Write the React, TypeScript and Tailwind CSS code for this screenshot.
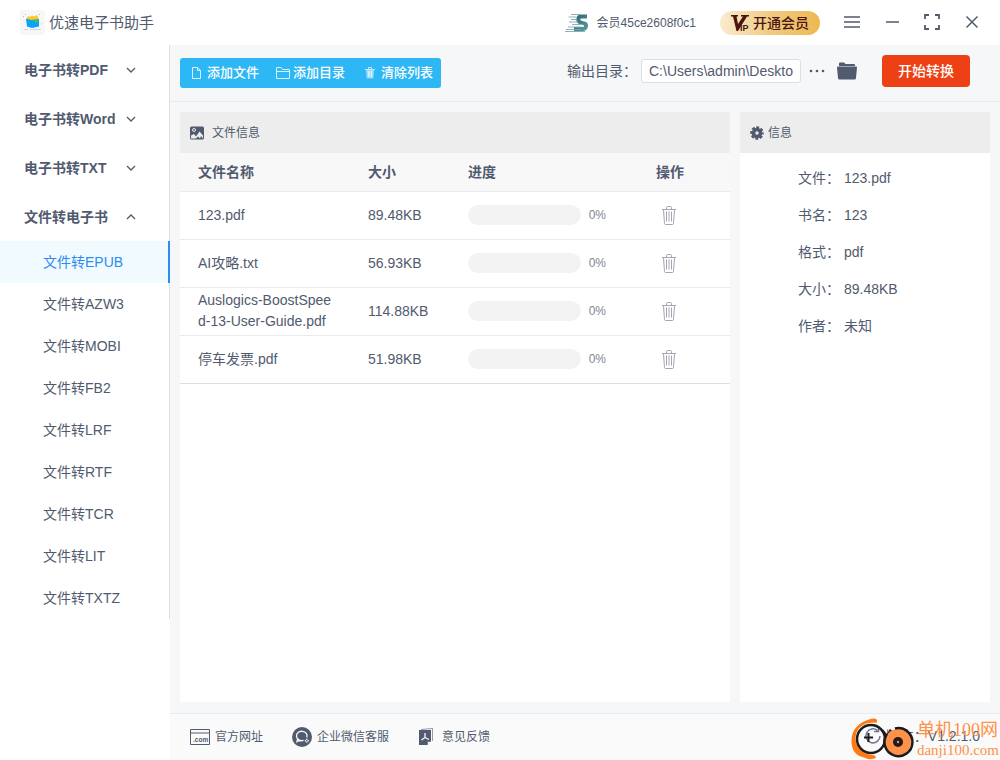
import { useState } from 'react';

const MENU = [
  { id: 'pdf', label: '电子书转PDF' },
  { id: 'word', label: '电子书转Word' },
  { id: 'txt', label: '电子书转TXT' },
  { id: 'ebook', label: '文件转电子书' },
];

const FORMATS = ['EPUB', 'AZW3', 'MOBI', 'FB2', 'LRF', 'RTF', 'TCR', 'LIT', 'TXTZ'];

const FILES = [
  { name: '123.pdf', size: '89.48KB', progress: 0 },
  { name: 'AI攻略.txt', size: '56.93KB', progress: 0 },
  { name: 'Auslogics-BoostSpeed-13-User-Guide.pdf', size: '114.88KB', progress: 0 },
  { name: '停车发票.pdf', size: '51.98KB', progress: 0 },
];

const INFO = [
  ['文件', '123.pdf'],
  ['书名', '123'],
  ['格式', 'pdf'],
  ['大小', '89.48KB'],
  ['作者', '未知'],
];

function AppLogo() {
  return (
    <svg width="25" height="25" viewBox="0 0 25 25" aria-hidden="true">
      <rect width="25" height="25" rx="3" fill="#f7f7f8" />
      <path d="M7 8l1-2 2 1 2-1.500 2 1 3-1.500 1.500 3v3H7z" fill="#ffc81e" />
      <path d="M6 8.500l5 1.500 8-1v7.500l-7 1.500-5-1.500z" fill="#08a4f7" />
      <path d="M14 10.500l4-.7v2l-3 .7z" fill="#4cc63c" />
      <path d="M3 6l1 1M5 4.500h1M19 4.500h1M21 14h1" stroke="#b4b4e0" />
      <path d="M4 19.500h4M10 19.500h11" stroke="#d8d3ee" />
    </svg>
  );
}

function Avatar() {
  return (
    <svg width="24" height="20" viewBox="0 0 24 20" fill="none" aria-hidden="true">
      <defs>
        <linearGradient id="avatar" x1="0" y1="0" x2="1" y2="1">
          <stop offset="0" stopColor="#356078" />
          <stop offset="1" stopColor="#4f9c9d" />
        </linearGradient>
      </defs>
      <path d="M22 3.500h-5.500c-4 0-4.500 5-.5 6l3 .8c3.500 1 2.500 5.700-1.500 5.700H9" stroke="url(#avatar)" strokeWidth="3.800" />
      <path d="M6 1.500h9M3.500 4h8M6 6.500h6M4 9h9M7 11.500h11M3 14h14M1 16.500h15M0 18.500h20" stroke="#7fa9ae" strokeWidth=".9" />
    </svg>
  );
}

function Chevron({ up }: { up?: boolean }) {
  return (
    <svg width="10" height="6" viewBox="0 0 10 6" fill="none" stroke="currentColor" strokeWidth="1.300" aria-hidden="true">
      <path d={up ? 'M1 5l4-4 4 4' : 'M1 1l4 4 4-4'} />
    </svg>
  );
}

function TrashIcon() {
  return (
    <svg width="14" height="19" viewBox="0 0 14 19" fill="none" stroke="#a3a7b3" aria-hidden="true">
      <path d="M4.500 3V1.500q0-1 1-1h3q1 0 1 1V3M0 3.500h14M1.500 4l1 13.500q.1 1 1 1h7q.9 0 1-1l1-13.500" />
      <path d="M4.500 5.500v10M7 5.500v10M9.500 5.500v10" />
    </svg>
  );
}

function Watermark() {
  return (
    <div className="pointer-events-none absolute right-0 bottom-0 flex items-end pr-px">
      <svg width="66" height="42" viewBox="0 0 66 42" fill="none" aria-hidden="true">
        <path d="M26 2Q24-.5 18 1.500Q1 7 .5 22T13 39.500q6 3 12 .5l-1-2.500-6-1Q5 32 4.500 21T15 5.500q5-1 11-1z" fill="#ff7a12" />
        <circle cx="20" cy="21" r="14" stroke="#1f1b1d" strokeWidth="2.500" />
        <path d="M17.500 15v9M13 19.500h9" stroke="#1f1b1d" strokeWidth="2" />
        <path d="M31 12l4 5M40 12l-4 6" stroke="#1f1b1d" strokeWidth="2.500" />
        <circle cx="47" cy="24" r="13" fill="#ff9148" />
        <path d="M44 10.500A14 14 0 1 1 36 16" stroke="#1f1b1d" strokeWidth="2.500" />
        <circle cx="47" cy="24" r="5" fill="#1f1b1d" />
        <circle cx="47" cy="24" r="1.200" fill="#ff9148" />
      </svg>
      <div className="font-['Liberation_Serif','Noto_Sans_CJK_SC',serif] text-[#ff9148]">
        <div className="text-[18px] leading-5">单机100网</div>
        <div className="text-[15px] leading-5">danji100.com</div>
      </div>
    </div>
  );
}

export default function App() {
  const [openMenu, setOpenMenu] = useState('ebook');
  const [format, setFormat] = useState('EPUB');
  const [output, setOutput] = useState('C:\\Users\\admin\\Deskto');

  return (
    <div className="relative flex min-h-screen flex-col bg-white font-['Liberation_Sans','Noto_Sans_CJK_SC',sans-serif] text-sm text-[#515a6e]">
      {/* Title bar */}
      <header className="flex h-[45px] items-center justify-between pr-[22px] pl-5">
        <div className="flex items-center gap-1">
          <AppLogo />
          <h1 className="text-[15px]">优速电子书助手</h1>
        </div>
        <div className="flex items-center">
          <Avatar />
          <span className="ml-2 text-xs">会员45ce2608f0c1</span>
          <button
            type="button"
            className="ml-6 flex h-6 w-[100px] items-center justify-center gap-[3px] rounded-full bg-linear-to-r from-[#faebd0] via-[#f1cb80] to-[#edb850] font-medium text-[#4a1511]"
          >
            <svg width="19" height="18" viewBox="0 0 19 18" fill="currentColor" aria-hidden="true">
              <path d="M0 1h7v1.500H5.500L7 10l5-7.500h-2V1h8v1.500h-2L7 17H5.500L2 2.500H0z" />
              <text x="9" y="17" fontSize="9" fontWeight="bold">IP</text>
            </svg>
            开通会员
          </button>
          <div className="ml-6 flex items-center gap-6 pb-0.5">
            <button type="button" aria-label="菜单">
              <svg width="16" height="16" viewBox="0 0 16 16" stroke="currentColor" strokeWidth="1.500" aria-hidden="true">
                <path d="M0 3h16M0 8h16M0 13h16" />
              </svg>
            </button>
            <button type="button" aria-label="最小化">
              <svg width="16" height="16" viewBox="0 0 16 16" stroke="currentColor" strokeWidth="1.500" aria-hidden="true">
                <path d="M2 8h13" />
              </svg>
            </button>
            <button type="button" aria-label="最大化">
              <svg width="16" height="16" viewBox="0 0 16 16" fill="none" stroke="currentColor" strokeWidth="1.800" aria-hidden="true">
                <path d="M1 5V1h4M11 1h4v4M15 11v4h-4M5 15H1v-4" />
              </svg>
            </button>
            <button type="button" aria-label="关闭">
              <svg width="14" height="16" viewBox="0 0 14 16" stroke="currentColor" strokeWidth="1.500" aria-hidden="true">
                <path d="M2.500 2.500l11 11M13.500 2.500l-11 11" />
              </svg>
            </button>
          </div>
        </div>
      </header>

      <div className="flex flex-1">
        {/* Sidebar */}
        <aside className="w-[170px] shrink-0">
          <nav className="border-r border-[#dcdee2]">
            {MENU.map((item) => (
              <button
                key={item.id}
                type="button"
                aria-expanded={openMenu === item.id}
                onClick={() => setOpenMenu(openMenu === item.id ? '' : item.id)}
                className="flex h-[49px] w-full items-center justify-between pr-[33px] pl-6 font-bold"
              >
                {item.label}
                <Chevron up={openMenu === item.id} />
              </button>
            ))}
            {openMenu === 'ebook' && (
              <ul>
                {FORMATS.map((name) => (
                  <li key={name} className="-mr-px">
                    <button
                      type="button"
                      onClick={() => setFormat(name)}
                      className={
                        name === format
                          ? 'block h-[42px] w-full border-r-2 border-[#2d8cf0] bg-[#f0faff] pl-[43px] text-left text-[#2d8cf0]'
                          : 'block h-[42px] w-full pl-[43px] text-left'
                      }
                    >
                      文件转{name}
                    </button>
                  </li>
                ))}
              </ul>
            )}
          </nav>
        </aside>

        <div className="flex min-w-0 flex-1 flex-col bg-[#f5f7f9]">
          {/* Toolbar */}
          <div className="flex h-[57px] items-center justify-between border-b border-[#e8eaec] pr-[30px] pl-2.5">
            <div className="flex h-[30px] items-center gap-[17px] rounded-[3px] bg-[#2db7f5] pr-2 pl-3 text-[13px] font-medium text-white">
              <button type="button" className="flex items-center gap-1.5">
                <svg width="9" height="12" viewBox="0 0 9 12" fill="none" stroke="currentColor" aria-hidden="true">
                  <path d="M.5.5h5l3 3v8h-8zM5.500.5v3h3" opacity=".85" />
                </svg>
                添加文件
              </button>
              <button type="button" className="flex items-center gap-[3px]">
                <svg width="14" height="12" viewBox="0 0 14 12" fill="none" stroke="currentColor" aria-hidden="true">
                  <path d="M.5 11V1q0-.5.5-.5h4l1.500 2H13q.5 0 .5.5v8q0 .5-.5.5H1q-.5 0-.5-.5zM.5 4.500h13" opacity=".85" />
                </svg>
                添加目录
              </button>
              <button type="button" className="flex items-center gap-1.5 pl-[3px]">
                <svg width="10" height="12" viewBox="0 0 10 12" fill="none" stroke="currentColor" aria-hidden="true">
                  <path d="M3.500 2V.5h3V2M0 2.500h10" opacity=".7" />
                  <path d="M1 3h8l-.6 8.500H1.600z" fill="currentColor" stroke="none" opacity=".5" />
                  <path d="M3.500 4v6M5 4v6M6.500 4v6" strokeWidth=".6" />
                </svg>
                清除列表
              </button>
            </div>

            <div className="flex items-center pb-1">
              <label htmlFor="output">输出目录：</label>
              <input
                id="output"
                value={output}
                onChange={(e) => setOutput(e.target.value)}
                className="ml-1 h-6 w-40 rounded-[3px] border border-[#dcdee2] bg-white px-[7px]"
              />
              <button type="button" aria-label="浏览" className="ml-2">
                <svg width="16" height="16" viewBox="0 0 16 16" fill="currentColor" aria-hidden="true">
                  <circle cx="2" cy="8" r="1.300" />
                  <circle cx="8" cy="8" r="1.300" />
                  <circle cx="14" cy="8" r="1.300" />
                </svg>
              </button>
              <button type="button" aria-label="打开目录" className="ml-3">
                <svg width="20" height="18" viewBox="0 0 20 18" fill="currentColor" aria-hidden="true">
                  <path d="M2 4V1.500Q2 .5 3 .5h4l1.500 1.500H17q1 0 1 1v1z" />
                  <path d="M1 4.500h18q1 0 1 1l-1 10.500q-.1 1.500-1.500 1.500h-15Q1.100 17.500 1 16L0 5.500q0-1 1-1z" />
                </svg>
              </button>
              <button type="button" className="ml-[25px] h-8 rounded bg-[#ed4014] px-4 font-medium text-white">
                开始转换
              </button>
            </div>
          </div>

          <main className="flex flex-1 gap-2.5 px-2.5 pt-2.5 pb-[11px]">
            {/* File list */}
            <section className="flex-1 bg-white">
              <h2 className="flex h-[41px] items-center gap-2 bg-[#ededed] pl-2.5 text-xs">
                <svg width="14" height="14" viewBox="0 0 14 14" aria-hidden="true">
                  <rect y=".5" width="14" height="13" rx="1.500" fill="currentColor" />
                  <circle cx="4" cy="4" r="1.500" fill="none" stroke="#ededed" />
                  <path d="M1 12.500V9.500L4 8l2 2.500L9.500 5.500 13 9.500v3L11 10l-1 2.500-2-2-2 2z" fill="#ededed" />
                </svg>
                文件信息
              </h2>
              <table className="w-full table-fixed border-collapse text-left">
                <thead className="bg-[#f8f8f9]">
                  <tr className="h-[38px] border-b border-[#e8eaec]">
                    <th className="w-[170px] pl-[18px]">文件名称</th>
                    <th className="w-[100px] pl-[18px]">大小</th>
                    <th className="pl-[18px]">进度</th>
                    <th className="w-[120px] text-center">操作</th>
                  </tr>
                </thead>
                <tbody>
                  {FILES.map((file) => (
                    <tr key={file.name} className="h-12 border-b border-[#e8eaec] last:border-[#dcdee2]">
                      <td className="px-[18px] leading-[21px] break-all">{file.name}</td>
                      <td className="pl-[18px]">{file.size}</td>
                      <td className="pr-1 pl-[18px]">
                        <div className="flex items-center gap-2 text-xs text-[#808695]">
                          <div className="h-5 flex-1 overflow-hidden rounded-full bg-[#f3f3f3]">
                            <div className="h-full bg-[#2db7f5]" style={{ width: `${file.progress}%` }} />
                          </div>
                          {file.progress}%
                        </div>
                      </td>
                      <td className="pr-0.5 text-center">
                        <button type="button" aria-label={`删除 ${file.name}`} className="align-middle">
                          <TrashIcon />
                        </button>
                      </td>
                    </tr>
                  ))}
                </tbody>
              </table>
            </section>

            {/* Details of the selected file */}
            <section className="w-[250px] bg-white">
              <h2 className="flex h-[41px] items-center gap-1 bg-[#ededed] pl-2.5 text-xs">
                <svg width="14" height="14" viewBox="0 0 14 14" aria-hidden="true">
                  <g fill="none" stroke="currentColor">
                    <circle cx="7" cy="7" r="3.500" strokeWidth="3.600" />
                    <circle cx="7" cy="7" r="5.700" strokeWidth="2.200" strokeDasharray="2.900 1.577" strokeDashoffset="1.450" />
                  </g>
                </svg>
                信息
              </h2>
              <dl className="pt-1.5 pl-[58px]">
                {INFO.map(([label, value]) => (
                  <div key={label} className="flex h-[37px] items-center gap-1">
                    <dt>{label}：</dt>
                    <dd>{value}</dd>
                  </div>
                ))}
              </dl>
            </section>
          </main>

          {/* Footer */}
          <footer className="flex h-[47px] items-center justify-between border-t border-[#e8eaec] bg-[#fafafa] pr-5 pl-5 text-xs">
            <div className="flex items-center gap-[29px]">
              <a href="#site" className="flex items-center gap-[5px]">
                <svg width="20" height="16" viewBox="0 0 20 16" fill="none" stroke="currentColor" aria-hidden="true">
                  <path d="M.5.5h19v15H.5zM.5 4h19" />
                  <text x="3" y="12.500" fontSize="6.500" fontWeight="bold" fill="currentColor" stroke="none">.com</text>
                </svg>
                官方网址
              </a>
              <a href="#service" className="flex items-center gap-[5px]">
                <svg width="20" height="20" viewBox="0 0 20 20" fill="none" aria-hidden="true">
                  <circle cx="10" cy="10" r="10" fill="currentColor" />
                  <path d="M14.800 10.500A5.300 4.700 0 1 0 11.500 13.400q-2 .8-4.500.1l-2 1.200.5-2.500" stroke="#fafafa" strokeWidth="1.300" />
                  <path d="M14.800 11.700v1.300M14.800 14.500v1.300M12.800 13.700h1.300M15.500 13.700h1.300" stroke="#fafafa" strokeWidth="1.400" />
                </svg>
                企业微信客服
              </a>
              <a href="#feedback" className="flex items-center gap-2">
                <svg width="16" height="18" viewBox="0 0 16 18" aria-hidden="true">
                  <path d="M3 1.500L14.500.5v12.500" fill="none" stroke="currentColor" opacity=".6" />
                  <path d="M1 2h12v11l-4 4H1z" fill="currentColor" />
                  <path d="M7 5v4.500L3.500 12M7 9.500l4 2" fill="none" stroke="#fafafa" strokeWidth="1.300" />
                  <path d="M9.500 17v-3.500H13" fill="#fafafa" stroke="currentColor" strokeWidth=".6" />
                </svg>
                意见反馈
              </a>
            </div>
            <div className="flex items-center gap-1 pb-0.5 text-sm">
              <svg width="18" height="18" viewBox="0 0 18 18" fill="none" stroke="#6b7a99" strokeWidth="1.500" aria-hidden="true">
                <path d="M13.500 3.500A7 7 0 1 0 16 9M14.500 0v4.500H10" />
              </svg>
              版本：V1.2.1.0
            </div>
          </footer>
        </div>
      </div>
      <Watermark />
    </div>
  );
}
